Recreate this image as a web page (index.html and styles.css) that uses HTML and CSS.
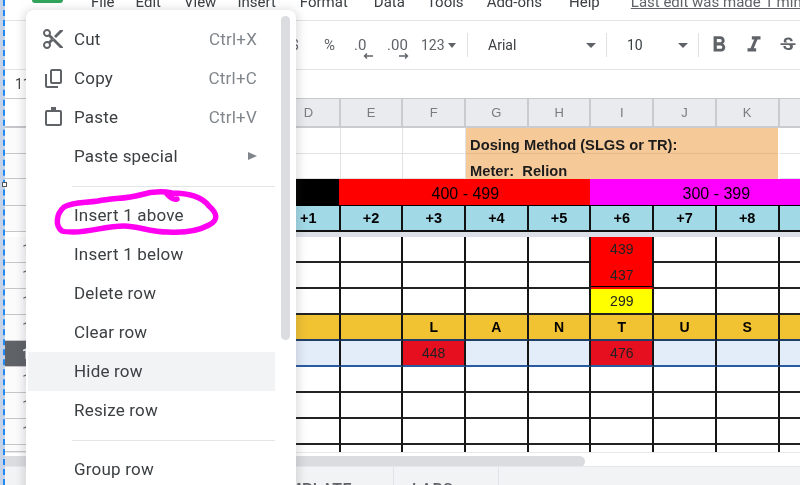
FILE: index.html
```html
<!DOCTYPE html>
<html lang="en">
<head>
<meta charset="utf-8">
<title>Sheet context menu</title>
<link rel="stylesheet" href="styles.css">
</head>
<body>
<div class="app">
  <div class="menubar">
    <div class="logo"></div>
    <span class="mi m-file">File</span>
    <span class="mi m-edit">Edit</span>
    <span class="mi m-view">View</span>
    <span class="mi m-insert">Insert</span>
    <span class="mi m-format">Format</span>
    <span class="mi m-data">Data</span>
    <span class="mi m-tools">Tools</span>
    <span class="mi m-addons">Add-ons</span>
    <span class="mi m-help">Help</span>
    <span class="mi m-edit-note">Last edit was made 1 minute ago</span>
  </div>
  <div class="toolbar">
    <span class="tb t-dollar">$</span>
    <span class="tb t-pct">%</span>
    <span class="tb t-dec"><span class="dt">.0</span>
      <svg class="arrow a-left" viewBox="0 0 10 6"><path d="M10 3H2M4 .5 1.5 3 4 5.5" /></svg></span>
    <span class="tb t-inc"><span class="dt">.00</span>
      <svg class="arrow a-right" viewBox="0 0 10 6"><path d="M0 3h8M6 .5 8.5 3 6 5.5" /></svg></span>
    <span class="tb t-123">123</span><i class="caret c-123"></i>
    <i class="sep s1"></i>
    <span class="tb t-font">Arial</span><i class="caret c-font"></i>
    <i class="sep s2"></i>
    <span class="tb t-size">10</span><i class="caret c-size"></i>
    <i class="sep s3"></i>
    <svg class="ic i-b" viewBox="0 0 24 24"><path d="M15.6 10.79c.97-.67 1.65-1.77 1.65-2.79 0-2.26-1.75-4-4-4H7v14h7.04c2.09 0 3.71-1.7 3.71-3.79 0-1.52-.86-2.82-2.15-3.42zM10 6.5h3c.83 0 1.5.67 1.5 1.5s-.67 1.5-1.5 1.5h-3v-3zm3.5 9H10v-3h3.5c.83 0 1.5.67 1.5 1.5s-.67 1.5-1.5 1.5z"/></svg>
    <svg class="ic i-i" viewBox="0 0 24 24"><path d="M10 4v3h2.21l-3.42 8H6v3h8v-3h-2.21l3.42-8H18V4z"/></svg>
    <svg class="ic i-s" viewBox="0 0 24 24"><path d="M6.85 7.08C6.85 4.37 9.45 3 12.24 3c1.64 0 3 .49 3.9 1.28.77.65 1.46 1.73 1.46 3.24h-3.01c0-.31-.05-.59-.15-.85-.29-.86-1.2-1.28-2.25-1.28-1.86 0-2.34 1.02-2.34 1.7 0 .48.25.88.74 1.21.38.25.77.48 1.41.7H7.39c-.21-.34-.54-.89-.54-1.92zM21 12v-2H3v2h9.62c1.15.45 1.96.75 1.96 1.97 0 1-.81 1.67-2.28 1.67-1.54 0-2.93-.54-2.93-2.51H6.4c0 .55.08 1.13.24 1.58.81 2.29 3.22 3.3 5.67 3.3 2.35 0 5.59-.92 5.59-4.34 0-.3-.01-1.16-.46-1.68H21z"/></svg>
  </div>
  <div class="formula"><span class="cellref">11</span></div>

  <div class="sheet">
    <div class="rh corner"></div>
    <div class="c hd">D</div><div class="c hd">E</div><div class="c hd">F</div><div class="c hd">G</div><div class="c hd">H</div><div class="c hd">I</div><div class="c hd">J</div><div class="c hd">K</div><div class="c hd">L</div>

    <div class="rh"><span class="rn">1</span></div>
    <div class="c lt"></div><div class="c lt"></div><div class="c lt"></div>
    <div class="c peach peach-top span5">Dosing Method (SLGS or TR):</div>
    <div class="c lt"></div>

    <div class="rh"><span class="rn">2</span></div>
    <div class="c lt"></div><div class="c lt"></div><div class="c lt"></div>
    <div class="c peach span5">Meter:&nbsp; Relion</div>
    <div class="c lt"></div>

    <div class="rh"><span class="rn">3</span></div>
    <div class="c band black"></div>
    <div class="c band red span4">400 - 499</div>
    <div class="c band magenta span4">300 - 399</div>

    <div class="rh"><span class="rn">4</span></div>
    <div class="c sky">+1</div><div class="c sky">+2</div><div class="c sky">+3</div><div class="c sky">+4</div><div class="c sky">+5</div><div class="c sky">+6</div><div class="c sky">+7</div><div class="c sky">+8</div><div class="c sky">+9</div>

    <div class="frozen"></div>

    <div class="rh"><span class="rn">10</span></div>
    <div class="c g"></div><div class="c g"></div><div class="c g"></div><div class="c g"></div><div class="c g"></div><div class="c g num r-top">439</div><div class="c g"></div><div class="c g"></div><div class="c g"></div>

    <div class="rh"><span class="rn">11</span></div>
    <div class="c g"></div><div class="c g"></div><div class="c g"></div><div class="c g"></div><div class="c g"></div><div class="c g num r-mid">437</div><div class="c g"></div><div class="c g"></div><div class="c g"></div>

    <div class="rh"><span class="rn">12</span></div>
    <div class="c g"></div><div class="c g"></div><div class="c g"></div><div class="c g"></div><div class="c g"></div><div class="c g num yellow">299</div><div class="c g"></div><div class="c g"></div><div class="c g"></div>

    <div class="rh"><span class="rn">13</span></div>
    <div class="c g gold"></div><div class="c g gold"></div><div class="c g gold">L</div><div class="c g gold">A</div><div class="c g gold">N</div><div class="c g gold">T</div><div class="c g gold">U</div><div class="c g gold">S</div><div class="c g gold"></div>

    <div class="rh rh-sel"><span class="rn">14</span></div>
    <div class="c g sel"></div><div class="c g sel"></div><div class="c g sel num crim">448</div><div class="c g sel"></div><div class="c g sel"></div><div class="c g sel num crim">476</div><div class="c g sel"></div><div class="c g sel"></div><div class="c g sel"></div>

    <div class="rh"><span class="rn">15</span></div>
    <div class="c g"></div><div class="c g"></div><div class="c g"></div><div class="c g"></div><div class="c g"></div><div class="c g"></div><div class="c g"></div><div class="c g"></div><div class="c g"></div>

    <div class="rh"><span class="rn">16</span></div>
    <div class="c g"></div><div class="c g"></div><div class="c g"></div><div class="c g"></div><div class="c g"></div><div class="c g"></div><div class="c g"></div><div class="c g"></div><div class="c g"></div>

    <div class="rh"><span class="rn">17</span></div>
    <div class="c g"></div><div class="c g"></div><div class="c g"></div><div class="c g"></div><div class="c g"></div><div class="c g"></div><div class="c g"></div><div class="c g"></div><div class="c g"></div>

    <div class="rh rh-last"></div>
    <div class="c g last"></div><div class="c g last"></div><div class="c g last"></div><div class="c g last"></div><div class="c g last"></div><div class="c g last"></div><div class="c g last"></div><div class="c g last"></div><div class="c g last"></div>
  </div>

  <div class="hscroll"><div class="hthumb"></div></div>
  <div class="tabs">
    <span class="tab tab-a">TEMPLATE</span>
    <span class="tab tab-b">LABS</span>
    <span class="tab tab-c"></span>
  </div>

  <div class="marquee"><i class="handle"></i></div>

  <div class="menu">
    <div class="thumb"></div>
    <div class="item"><svg class="mic" viewBox="0 0 24 24"><path d="M9.64 7.64c.23-.5.36-1.05.36-1.64 0-2.21-1.79-4-4-4S2 3.79 2 6s1.79 4 4 4c.59 0 1.14-.13 1.64-.36L10 12l-2.36 2.36C7.14 14.13 6.59 14 6 14c-2.21 0-4 1.79-4 4s1.79 4 4 4 4-1.79 4-4c0-.59-.13-1.14-.36-1.64L12 14l7 7h3v-1L9.64 7.64zM6 8c-1.1 0-2-.89-2-2s.9-2 2-2 2 .89 2 2-.9 2-2 2zm0 12c-1.1 0-2-.89-2-2s.9-2 2-2 2 .89 2 2-.9 2-2 2zm6-7.5c-.28 0-.5-.22-.5-.5s.22-.5.5-.5.5.22.5.5-.22.5-.5.5zM19 3l-6 6 2 2 7-7V3h-3z"/></svg><span class="lbl">Cut</span><span class="key">Ctrl+X</span></div>
    <div class="item"><svg class="mic mic-line" viewBox="0 0 24 24"><rect x="10" y="4" width="10" height="13" rx="1"/><path d="M5 8v12a1 1 0 0 0 1 1h11"/></svg><span class="lbl">Copy</span><span class="key">Ctrl+C</span></div>
    <div class="item"><svg class="mic mic-line" viewBox="0 0 24 24"><rect x="5" y="6" width="15" height="14" rx="1"/><path class="tabfill" d="M10 2h5v4h-5z"/></svg><span class="lbl">Paste</span><span class="key">Ctrl+V</span></div>
    <div class="item"><span class="lbl lbl-plain">Paste special</span><i class="tri"></i></div>
    <div class="div"></div>
    <div class="item"><span class="lbl lbl-plain">Insert 1 above</span></div>
    <div class="item"><span class="lbl lbl-plain">Insert 1 below</span></div>
    <div class="item"><span class="lbl lbl-plain">Delete row</span></div>
    <div class="item"><span class="lbl lbl-plain">Clear row</span></div>
    <div class="item hover"><span class="lbl lbl-plain">Hide row</span></div>
    <div class="item"><span class="lbl lbl-plain">Resize row</span></div>
    <div class="div"></div>
    <div class="item"><span class="lbl lbl-plain">Group row</span></div>
  </div>

  <svg class="scribble" viewBox="0 0 800 485"><path d="M62 231C55 226 56 214 64 207C72 202 84 203 98 201C112 198 126 199 140 195C150 192 162 191 172 193C190 193 203 198 209 206C217 213 219 220 209 225C198 231 184 233 168 232C150 232 138 226 124 226C106 226 90 232 74 232C68 232 65 232 62 231ZM167 194Q172 200 177 199"/></svg>
</div>
</body>
</html>
```
FILE: styles.css
```css
* { box-sizing: border-box; }
html, body { margin: 0; padding: 0; height: 100%; overflow: hidden; background: #fff; }
.app {
  position: relative;
  width: 800px;
  height: 485px;
  overflow: hidden;
  font-family: Roboto, "Liberation Sans", sans-serif;
  color: #3c4043;
  display: flex;
  flex-direction: column;
  filter: blur(0.35px);
}

/* menu bar */
.menubar {
  flex: none;
  height: 21px;
  display: flex;
  align-items: flex-start;
  border-bottom: 1px solid #e2e3e6;
  overflow: hidden;
  white-space: nowrap;
}
.logo { flex: none; width: 31px; height: 3px; margin-left: 32px; background: #2fa45a; border-radius: 0 0 3px 3px; }
.mi { flex: none; font-size: 15px; line-height: 20px; margin-top: -8px; }
.m-file { margin-left: 28px; }
.m-edit { margin-left: 21px; }
.m-view { margin-left: 23px; }
.m-insert { margin-left: 21px; }
.m-format { margin-left: 24px; }
.m-data { margin-left: 26px; }
.m-tools { margin-left: 22px; }
.m-addons { margin-left: 23px; }
.m-help { margin-left: 27px; }
.m-edit-note { margin-left: 31px; color: #5f6368; text-decoration: underline; }

/* tool bar */
.toolbar {
  flex: none;
  height: 49px;
  display: flex;
  align-items: center;
  border-bottom: 1px solid #e2e3e6;
  color: #5f6368;
  white-space: nowrap;
}
.tb { flex: none; font-size: 14px; line-height: 20px; }
.t-dollar { margin-left: 291px; width: 10px; }
.t-pct { margin-left: 23px; width: 12px; font-size: 15px; }
.t-dec { position: relative; margin-left: 18px; width: 13px; font-size: 15px; }
.t-inc { position: relative; margin-left: 20px; width: 22px; font-size: 15px; }
.dt { letter-spacing: 0; }
.arrow { position: absolute; width: 10px; height: 6px; top: 18px; }
.arrow path { fill: none; stroke: #5f6368; stroke-width: 1.4; }
.a-left { left: 9px; }
.a-right { left: 12px; }
.t-123 { margin-left: 12px; width: 24px; font-size: 14px; }
.caret { flex: none; width: 0; height: 0; border-left: 5px solid transparent; border-right: 5px solid transparent; border-top: 5px solid #5f6368; }
.c-123 { margin-left: 3px; border-left-width: 4.5px; border-right-width: 4.5px; }
.sep { flex: none; width: 1px; height: 24px; background: #dfe1e4; }
.s1 { margin-left: 11px; }
.t-font { margin-left: 20px; width: 30px; font-size: 14px; color: #3c4043; }
.c-font { margin-left: 68px; }
.s2 { margin-left: 10px; }
.t-size { margin-left: 20px; width: 16px; font-size: 14px; color: #3c4043; }
.c-size { margin-left: 35px; }
.s3 { margin-left: 10px; }
.ic { flex: none; fill: #5f6368; }
.i-b { width: 26px; height: 26px; margin-left: 7px; }
.i-i { width: 26px; height: 26px; margin-left: 9px; }
.i-s { width: 20px; height: 20px; margin-left: 11px; }

/* formula bar */
.formula {
  flex: none;
  height: 29px;
  border-bottom: 1px solid #c7c9cc;
  display: flex;
  align-items: center;
}
.cellref { margin-left: 15px; font-size: 14px; color: #444; }

/* sheet */
.sheet {
  flex: none;
  height: 353px;
  display: grid;
  grid-template-columns: 278px repeat(9, 62.7px);
  grid-template-rows: 29px 26px 25px 27px 26px 5px 26px 26px 26px 26px 26px 26px 26px 26px 7px;
  overflow: hidden;
  font-family: "Liberation Sans", Arial, sans-serif;
  font-size: 14px;
}
.rh { background: #fbfbfc; border-bottom: 1px solid #c4c6c9; padding-left: 5px; display: flex; align-items: center; color: #5f6368; font-size: 14px; }
.rn { width: 50px; text-align: center; font-family: Roboto, sans-serif; }
.corner { background: #fff; border-bottom: 2px solid #c4c6c9; }
.rh-sel { background: #5f6368; color: #fff; font-weight: 700; }
.rh-last { border-bottom: 1px solid #c4c6c9; }
.c { display: flex; align-items: center; justify-content: center; color: #000; min-width: 0; white-space: nowrap; }
.hd { background: #e9ebee; color: #7a7d80; font-size: 13px; border-right: 2px solid #c9cbce; border-bottom: 2px solid #c9cbce; }
.lt { border-right: 1px solid #e2e2e2; border-bottom: 1px solid #e2e2e2; }
.peach { background: #f6c999; justify-content: flex-start; margin-right: 1.5px; padding-left: 4px; padding-top: 9px; font-weight: 700; font-size: 14.7px; color: #1c1c1c; }
.peach-top { border-bottom: 1px solid #e6b98a; }
.span5 { grid-column: span 5; }
.span4 { grid-column: span 4; }
.band { font-size: 16px; padding-top: 3px; border-bottom: 1px solid #000; }
.black { background: #000; }
.red { background: #ff0000; margin-left: -1.5px; }
.magenta { background: #ff00ff; margin-left: -1px; }
.sky { background: #a2d9e6; font-weight: 700; font-size: 14.5px; border-right: 2px solid #111; border-bottom: 2px solid #111; }
.frozen { grid-column: 2 / -1; background: #dcdfe8; }
.g { background: #fff; border-right: 2px solid #151515; border-bottom: 2px solid #222; }
.num { color: #222; font-size: 14px; }
.r-top { background: #ff0000; border-bottom: 0; padding-bottom: 2px; }
.r-mid { background: #ff0000; border-bottom: 2px solid #ff0000; box-shadow: inset 0 -1px 0 #000; }
.yellow { background: #ffff00; }
.gold { background: #f1c232; font-weight: 700; font-size: 14px; border-bottom-color: #1f3f6b; }
.sel { background: #e3edf9; border-bottom-color: #2a5aa0; }
.crim { background: #e50f1f; }
.last { border-bottom: 0; }

/* bottom */
.hscroll { flex: none; height: 14px; padding-top: 3px; border-top: 1px solid #e8e9ea; }
.hthumb { width: 585px; height: 11px; background: #dadce0; border-radius: 0 6px 6px 0; }
.tabs { flex: none; height: 19px; background: #f1f3f4; display: flex; border-top: 1px solid #e6e7e8; overflow: hidden; }
.tab { flex: none; height: 30px; padding-top: 13px; font-size: 16px; letter-spacing: .5px; font-weight: 500; color: #5f6368; border-right: 1px solid #e2e3e6; white-space: nowrap; }
.tab-a { width: 394px; text-align: right; padding-right: 41px; }
.tab-b { width: 105px; padding-left: 18px; }
.tab-c { border: 0; }

/* overlays */
.marquee { position: absolute; left: 0; top: 0; width: 5px; height: 485px; background: #c4d3e8; border-right: 2px dashed #2389f0; }
.handle { position: absolute; left: 2px; top: 182px; width: 5px; height: 5px; background: #fff; border: 1px solid #555; }

.menu {
  position: absolute;
  left: 26px;
  top: 10px;
  width: 270px;
  height: 490px;
  padding: 10px 21px 0 2px;
  background: #fff;
  border-radius: 8px;
  box-shadow: 0 2px 8px 3px rgba(60, 64, 67, .16);
  color: #3c4043;
}
.thumb { position: absolute; left: 255px; top: 6px; width: 9px; height: 324px; border-radius: 5px; background: #dadce0; }
.item { height: 39px; display: flex; align-items: center; padding-right: 18px; padding-bottom: 2px; font-size: 17px; letter-spacing: .2px; white-space: nowrap; }
.hover { background: #f1f3f4; }
.mic { flex: none; width: 24px; height: 24px; margin-left: 13px; fill: #5f6368; }
.mic-line { fill: none; stroke: #5f6368; stroke-width: 2; }
.tabfill { fill: #5f6368; stroke: none; }
.lbl { flex: 1; margin-left: 9px; }
.lbl-plain { margin-left: 46px; }
.key { flex: none; color: #80868b; letter-spacing: .2px; }
.tri { flex: none; width: 0; height: 0; border-left: 9px solid #80868b; border-top: 4.5px solid transparent; border-bottom: 4.5px solid transparent; }
.div { height: 20px; margin-left: 44px; display: flex; align-items: center; }
.div::after { content: ""; flex: 1; height: 1px; background: #e4e5e7; }

.scribble { position: absolute; left: 0; top: 0; width: 800px; height: 485px; pointer-events: none; }
.scribble path { fill: none; stroke: #ff00f0; stroke-width: 5.5; stroke-linecap: round; stroke-linejoin: round; }
```
